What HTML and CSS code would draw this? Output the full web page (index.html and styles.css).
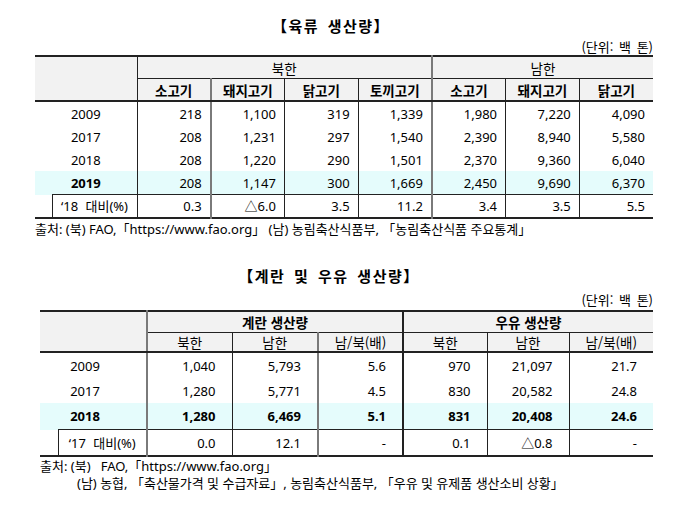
FILE: index.html
```html
<!DOCTYPE html>
<html lang="ko">
<head>
<meta charset="utf-8">
<link rel="stylesheet" href="styles.css">
</head>
<body>
<section class="sec sec1">
  <h2 class="title t1title">【육류 생산량】</h2>
  <div class="unit">(단위: 백 톤)</div>
  <table class="tbl tbl1">
    <colgroup>
      <col class="ca1"><col class="cb1">
      <col class="cn1"><col class="cn1"><col class="cn1"><col class="cn1"><col class="cn1"><col class="cn1"><col class="cn1">
    </colgroup>
    <thead>
      <tr class="h1">
        <th colspan="2" rowspan="2" class="corner"></th>
        <th colspan="4" class="vl nb">북한</th>
        <th colspan="3" class="vg nb">남한</th>
      </tr>
      <tr class="h2">
        <th class="vl">소고기</th><th class="vg">돼지고기</th><th class="vl">닭고기</th><th class="vl">토끼고기</th>
        <th class="vg">소고기</th><th class="vl">돼지고기</th><th class="vl">닭고기</th>
      </tr>
    </thead>
    <tbody>
      <tr><td colspan="2" class="yr">2009</td><td class="vl">218</td><td class="vg">1,100</td><td class="vl">319</td><td class="vl">1,339</td><td class="vg">1,980</td><td class="vl">7,220</td><td class="vl">4,090</td></tr>
      <tr><td colspan="2" class="yr">2017</td><td class="vl">208</td><td class="vg">1,231</td><td class="vl">297</td><td class="vl">1,540</td><td class="vg">2,390</td><td class="vl">8,940</td><td class="vl">5,580</td></tr>
      <tr><td colspan="2" class="yr">2018</td><td class="vl">208</td><td class="vg">1,220</td><td class="vl">290</td><td class="vl">1,501</td><td class="vg">2,370</td><td class="vl">9,360</td><td class="vl">6,040</td></tr>
      <tr class="hl"><td colspan="2" class="yr b">2019</td><td class="vl">208</td><td class="vg">1,147</td><td class="vl">300</td><td class="vl">1,669</td><td class="vg">2,450</td><td class="vl">9,690</td><td class="vl">6,370</td></tr>
      <tr class="cmp"><td class="blank"></td><td class="lbl">‘18 대비(%)</td><td class="vl">0.3</td><td class="vg">△6.0</td><td class="vl">3.5</td><td class="vl">11.2</td><td class="vg">3.4</td><td class="vl">3.5</td><td class="vl">5.5</td></tr>
    </tbody>
  </table>
  <p class="src">출처: (북) FAO,「https://www.fao.org」 (남) 농림축산식품부, 「농림축산식품 주요통계」</p>
</section>

<section class="sec sec2">
  <h2 class="title t2title">【계란 및 우유 생산량】</h2>
  <div class="unit">(단위: 백 톤)</div>
  <table class="tbl tbl2">
    <colgroup>
      <col class="ca2"><col class="cb2">
      <col class="c85"><col class="c86"><col class="c85"><col class="c84"><col class="c82"><col class="c84">
    </colgroup>
    <thead>
      <tr class="h1">
        <th colspan="2" rowspan="2" class="corner"></th>
        <th colspan="3" class="vg">계란 생산량</th>
        <th colspan="3" class="vk">우유 생산량</th>
      </tr>
      <tr class="h2 nbrow">
        <th class="vg">북한</th><th class="vl">남한</th><th class="vg">남/북(배)</th>
        <th class="vk">북한</th><th class="vl">남한</th><th class="vl">남/북(배)</th>
      </tr>
    </thead>
    <tbody>
      <tr><td colspan="2" class="yr">2009</td><td class="vg">1,040</td><td class="vl">5,793</td><td class="vg">5.6</td><td class="vk">970</td><td class="vl">21,097</td><td class="vl">21.7</td></tr>
      <tr><td colspan="2" class="yr">2017</td><td class="vg">1,280</td><td class="vl">5,771</td><td class="vg">4.5</td><td class="vk">830</td><td class="vl">20,582</td><td class="vl">24.8</td></tr>
      <tr class="hl b"><td colspan="2" class="yr">2018</td><td class="vg">1,280</td><td class="vl">6,469</td><td class="vg">5.1</td><td class="vk">831</td><td class="vl">20,408</td><td class="vl">24.6</td></tr>
      <tr class="cmp"><td class="blank"></td><td class="lbl">‘17 대비(%)</td><td class="vg">0.0</td><td class="vl">12.1</td><td class="vg">-</td><td class="vk">0.1</td><td class="vl">△0.8</td><td class="vl">-</td></tr>
    </tbody>
  </table>
  <div class="src2">
    <p class="src">출처: (북)&nbsp;&nbsp; FAO,「https://www.fao.org」</p>
    <p class="src ind">(남) 농협, 「축산물가격 및 수급자료」, 농림축산식품부, 「우유 및 유제품 생산소비 상황」</p>
  </div>
</section>
</body>
</html>
```

FILE: styles.css
```css
body {
  margin: 0;
  background: #fff;
  color: #000;
  font-family: "Noto Sans", "Noto Sans CJK KR", sans-serif;
  font-size: 13px;
}

.sec1 {
  margin-left: 35px;
  width: 618px;
  padding-top: 16px;
}

.sec2 {
  margin-left: 40px;
  width: 613px;
  padding-top: 28px;
}

.title {
  margin: 0;
  font-family: "Noto Sans CJK KR", sans-serif;
  font-size: 15px;
  font-weight: bold;
  line-height: 20px;
  text-align: center;
  letter-spacing: 1.5px;
  word-spacing: 3px;
}

.t1title { padding-right: 26px; }
.t2title { padding-right: 35px; margin-bottom: 3px; }

.unit {
  text-align: right;
  line-height: 16px;
  height: 16px;
  padding-top: 3px;
  font-family: "Noto Sans CJK KR", sans-serif;
  font-size: 13px;
  word-spacing: 2px;
}

.sec2 .unit { padding-bottom: 2px; }

.tbl {
  border-collapse: collapse;
  table-layout: fixed;
  width: 100%;
  border-top: 2px solid #222;
  border-bottom: 2px solid #222;
}

.ca1 { width: 17px; }
.cb1 { width: 85px; }
.cn1 { width: 73.7px; }

.ca2 { width: 18px; }
.cb2 { width: 89px; }
.c85 { width: 85px; }
.c86 { width: 86px; }
.c84 { width: 84px; }
.c82 { width: 82px; }

th {
  background: #f2f2f2;
  font-family: "Noto Sans CJK KR", sans-serif;
  font-weight: bold;
  font-size: 13.5px;
  text-align: center;
  padding: 0;
  line-height: 18px;
}

th.nb, .nbrow th { font-weight: normal; }

.tbl1 .h1 th { height: 21px; }
.tbl1 .h2 th { height: 21px; }
.tbl2 .h1 th { height: 20px; }
.tbl2 .h2 th { height: 18px; }

.h1 th { border-bottom: 1px solid #222; }
.h1 th.corner { border-bottom: 2px solid #222; }
.h2 th { border-bottom: 2px solid #222; }

td {
  padding: 0 8px 0 0;
  text-align: right;
  line-height: 18px;
  white-space: nowrap;
}

.tbl1 tbody td { height: 23px; }
.tbl1 tbody .cmp td { height: 22px; }
.tbl2 tbody td { height: 25px; padding-right: 16px; }
.tbl2 tbody .hl td { height: 26px; }

td.yr { text-align: center; padding: 0; }
.b, .b td { font-weight: bold; }

.hl td { background: #e5fcfc; }

.vl { border-left: 1px solid #222; }
.vg { border-left: 2px solid #7a7a7a; }
.vk { border-left: 2px solid #222; }

.cmp td { border-top: 1px solid #222; }
.cmp td.blank { border-top: none; padding: 0; }
.cmp td.lbl {
  border-left: 1px solid #222;
  text-align: center;
  padding: 0;
  word-spacing: 4px;
  font-family: "Noto Sans", "Noto Sans CJK KR", sans-serif;
}

.src {
  margin: 0;
  line-height: 18px;
  font-family: "Noto Sans", "Noto Sans CJK KR", sans-serif;
  font-size: 13px;
  padding-top: 1px;
}

.src2 { padding-top: 1px; }
.src2 .src { padding-top: 0; line-height: 17px; }
.src.ind { padding-left: 37px; }
```
